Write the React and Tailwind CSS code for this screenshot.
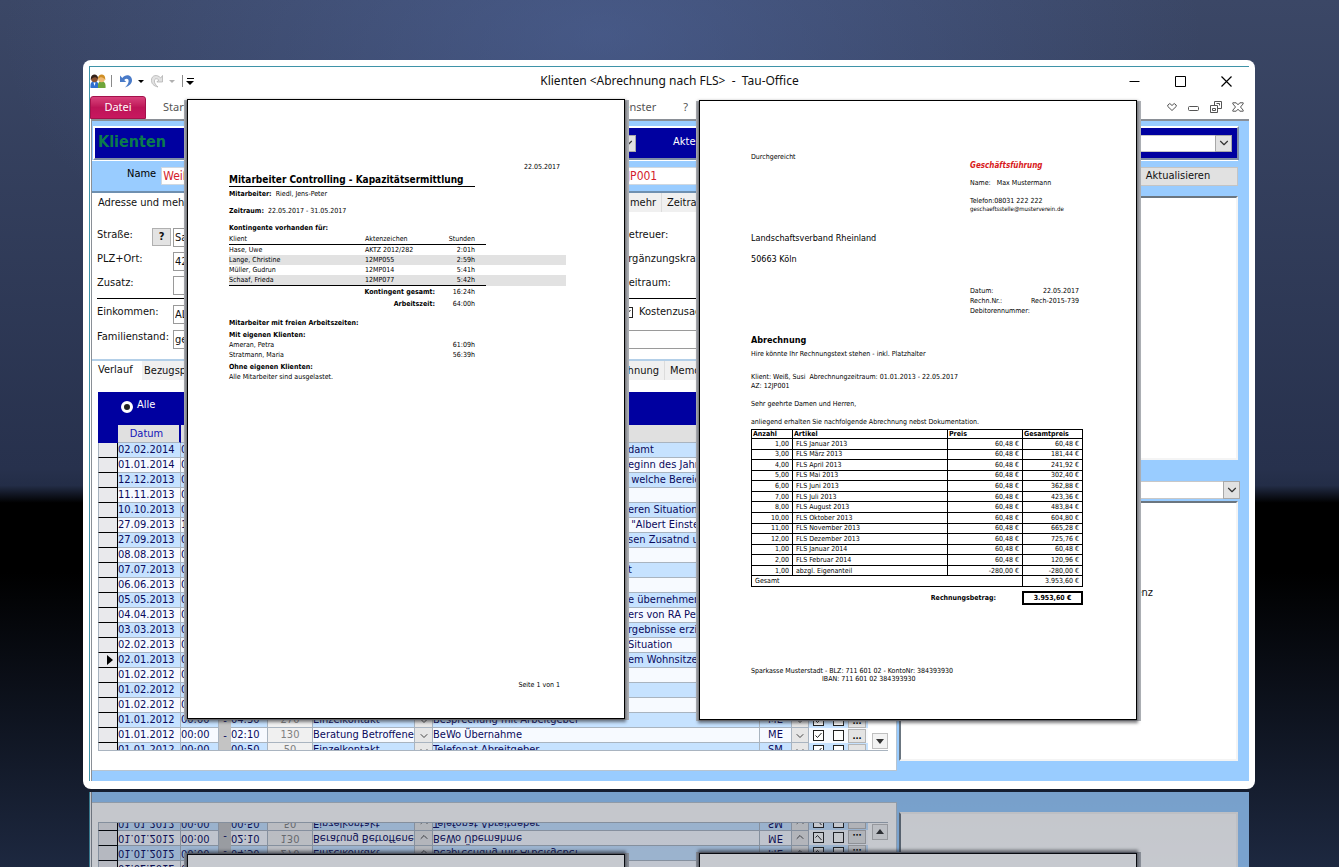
import React, { useId } from 'react';
import { ChevronDown } from 'lucide-react';

const entries = [
  { date: '02.02.2014', from: '00:00', tail: 'damt' },
  { date: '01.01.2014', from: '00:00', tail: 'eginn des Jahres' },
  { date: '12.12.2013', from: '00:00', tail: ' welche Bereiche' },
  { date: '11.11.2013', from: '00:00' },
  { date: '10.10.2013', from: '00:00', tail: 'eren Situation' },
  { date: '27.09.2013', from: '10:00', tail: ' "Albert Einstein"' },
  { date: '27.09.2013', from: '00:00', tail: 'sen Zusatnd und' },
  { date: '08.08.2013', from: '00:00' },
  { date: '07.07.2013', from: '00:00', tail: 't' },
  { date: '06.06.2013', from: '00:00' },
  { date: '05.05.2013', from: '00:00', tail: 'e übernehmen' },
  { date: '04.04.2013', from: '00:00', tail: 'ers von RA Peter' },
  { date: '03.03.2013', from: '00:00', tail: 'rgebnisse erzielt' },
  { date: '02.02.2013', from: '00:00', tail: 'Situation' },
  { date: '02.01.2013', from: '00:00', tail: 'em Wohnsitze', current: true },
  { date: '01.02.2012', from: '00:00' },
  { date: '01.02.2012', from: '00:00' },
  { date: '01.02.2012', from: '00:00' },
  { date: '01.01.2012', from: '00:00', to: '04:30', min: '270', type: 'Einzelkontakt', text: 'Besprechung mit Arbeitgeber', who: 'ME' },
  { date: '01.01.2012', from: '00:00', to: '02:10', min: '130', type: 'Beratung Betroffener', text: 'BeWo Übernahme', who: 'ME' },
  { date: '01.01.2012', from: '00:00', to: '00:50', min: '50', type: 'Einzelkontakt', text: 'Telefonat Abreitgeber', who: 'SM' },
];

const quotas = [
  ['Hase, Uwe', 'AKTZ 2012/282', '2:01h'],
  ['Lange, Christine', '12MP055', '2:59h'],
  ['Müller, Gudrun', '12MP014', '5:41h'],
  ['Schaaf, Frieda', '12MP077', '5:42h'],
];

const positions = [
  ['1,00', 'FLS Januar 2013', '60,48 €', '60,48 €'],
  ['3,00', 'FLS März 2013', '60,48 €', '181,44 €'],
  ['4,00', 'FLS April 2013', '60,48 €', '241,92 €'],
  ['5,00', 'FLS Mai 2013', '60,48 €', '302,40 €'],
  ['6,00', 'FLS Juni 2013', '60,48 €', '362,88 €'],
  ['7,00', 'FLS Juli 2013', '60,48 €', '423,36 €'],
  ['8,00', 'FLS August 2013', '60,48 €', '483,84 €'],
  ['10,00', 'FLS Oktober 2013', '60,48 €', '604,80 €'],
  ['11,00', 'FLS November 2013', '60,48 €', '665,28 €'],
  ['12,00', 'FLS Dezember 2013', '60,48 €', '725,76 €'],
  ['1,00', 'FLS Januar 2014', '60,48 €', '60,48 €'],
  ['2,00', 'FLS Februar 2014', '60,48 €', '120,96 €'],
  ['1,00', 'abzgl. Eigenanteil', '-280,00 €', '-280,00 €'],
];

const Combo = ({ label, className }) => (
  <div className={`relative bg-white ${className}`}>
    <select aria-label={label} className="block h-full w-full appearance-none border border-[#c8c8c8] bg-white"></select>
    <span className="pointer-events-none absolute inset-y-0 right-0 flex w-[17px] items-center justify-center border border-[#a8a8a8] bg-[#e2e2e2]">
      <ChevronDown className="h-[14px] w-[14px] text-[#333]" strokeWidth={2} />
    </span>
  </div>
);

const TitleBar = () => (
  <div className="grid h-7 grid-cols-[1fr_auto_1fr] items-center bg-white">
    <div className="flex items-center">
      <svg className="h-[15px] w-4" viewBox="0 0 16 15">
        <path d="M.5 14c-.5-5 1-7 4-7s4.500 2 4 7z" fill="#2f6fd0" />
        <path d="M8 14c-.5-5 1-7 3.500-7s4.500 2 4 7z" fill="#6fa53a" />
        <circle cx="4.500" cy="4.800" r="3.400" fill="#8a5231" />
        <path d="M.8 6C0-1 8.500-1 8 5 6 2.500 3 2.500.8 6z" fill="#33221a" />
        <circle cx="11.500" cy="4.800" r="3.400" fill="#efb873" />
        <path d="M8 5c0-6 8-6 7.300 1C13 2.500 10 2.500 8 5z" fill="#cf8f25" />
        <path d="M3.500 8.500 4.500 12l1-3.500z" fill="#fff" />
      </svg>
      <span className="ml-[5px] h-3 w-px bg-[#8a8a8a]" />
      <button type="button" aria-label="Rückgängig" className="ml-2">
        <svg className="h-[14px] w-3" viewBox="0 0 12 14">
          <path d="M0 1.500V8h6.200L4.200 6C6 4.200 8.600 4.400 8.600 7c0 2.200-1.200 4-3.600 6.500C9.500 12 12 9.500 12 6.300 12 1.200 5.800-.6 2.300 4z" fill="#4a7bc8" />
        </svg>
      </button>
      <span className="ml-[6px] border-x-[3px] border-t-[3px] border-x-transparent border-t-black" />
      <button type="button" aria-label="Wiederholen" className="ml-[7px]">
        <svg className="h-[14px] w-3" viewBox="0 0 12 14">
          <path d="M11.500 1.500V8H5.800l2-2C6 4.200 3.400 4.400 3.400 7c0 2.200 1.200 4 3.600 6C2.500 12 .4 9.500.4 6.300.4 1.200 6.200-.2 9.700 4z" fill="#e2e2e2" stroke="#aaa" strokeWidth=".7" />
        </svg>
      </button>
      <span className="ml-[6px] border-x-[3px] border-t-[3px] border-x-transparent border-t-[#b0b0b0]" />
      <span className="ml-[7px] h-3 w-px bg-[#8a8a8a]" />
      <button type="button" aria-label="Symbolleiste anpassen" className="ml-[3px] flex flex-col items-center gap-0.5">
        <span className="h-px w-[7px] bg-black" />
        <span className="border-x-4 border-t-4 border-x-transparent border-t-black" />
      </button>
    </div>
    <h1 className="whitespace-pre font-['Noto_Sans',sans-serif] text-[12px] text-[#111]">{'Klienten <Abrechnung nach FLS>  -  Tau-Office'}</h1>
    <div className="flex justify-end text-black">
      <button type="button" aria-label="Minimieren" className="flex w-[46px] items-center justify-center">
        <svg className="h-[11px] w-[11px]" viewBox="0 0 11 11" fill="none" stroke="currentColor"><path d="M.5 5.500h10" /></svg>
      </button>
      <button type="button" aria-label="Maximieren" className="flex w-[46px] items-center justify-center">
        <svg className="h-[11px] w-[11px]" viewBox="0 0 11 11" fill="none" stroke="currentColor"><path d="M.5.5h10v10H.5z" /></svg>
      </button>
      <button type="button" aria-label="Schließen" className="flex w-[46px] items-center justify-center">
        <svg className="h-[11px] w-[11px]" viewBox="0 0 11 11" fill="none" stroke="currentColor" strokeWidth="1.200"><path d="m.5.5 10 10M10.500.5l-10 10" /></svg>
      </button>
    </div>
  </div>
);

const MenuBar = () => (
  <div className="flex h-6 items-center bg-white font-['Noto_Sans',sans-serif] text-[11px] text-[#555]">
    <button type="button" className="h-[23px] w-14 rounded-t-[3px] border border-[#a3114b] bg-linear-to-b from-[#d9407c] via-[#bd1457] to-[#c8185f] text-white">Datei</button>
    <button type="button" className="ml-[17px]">Start</button>
    <button type="button" className="ml-auto">Fenster</button>
    <button type="button" className="ml-[27px] mr-[473px]">?</button>
    <div className="flex">
      <button type="button" aria-label="Menüband ausblenden" className="flex w-[22px] items-center justify-center">
        <svg className="h-[10px] w-[10px]" viewBox="0 0 10 10" fill="none" stroke="#555"><path d="M.8 3 2.800 1.500 5 3.500l2.200-2L9.200 3v1.500L5 8.500.8 4.500z" /></svg>
      </button>
      <button type="button" aria-label="Fenster minimieren" className="flex w-[22px] items-center justify-center">
        <svg className="h-[10px] w-3" viewBox="0 0 12 10" fill="none" stroke="#555"><rect x=".5" y="4.500" width="10" height="4" rx="1" /></svg>
      </button>
      <button type="button" aria-label="Fenster wiederherstellen" className="flex w-[22px] items-center justify-center">
        <svg className="h-3 w-3" viewBox="0 0 12 12" fill="none" stroke="#555"><path d="M4.500 4V.5h7v7H8M.5 4.500h7v7h-7zM2.500 7.500h3v2h-3zM6.500 2.500h3v2" /></svg>
      </button>
      <button type="button" aria-label="Fenster schließen" className="flex w-[22px] items-center justify-center">
        <svg className="h-[10px] w-3" viewBox="0 0 12 10" fill="none" stroke="#555"><path d="M.8.8h3.400L6 2.800 7.800.8h3.400v1L8.500 5l2.700 3.200v1H7.800L6 7.200 4.200 9.200H.8v-1L3.500 5 .8 1.800z" /></svg>
      </button>
    </div>
  </div>
);

const Field = ({ label, value }) => (
  <label className="flex h-6 w-[530px] items-end pl-[5px]">
    <span className="flex h-full w-[76px] items-center whitespace-nowrap">{label}</span>
    <input defaultValue={value} className="h-[19px] w-[240px] border border-[#9a9a9a] bg-white px-px" />
  </label>
);

const Tab = ({ children, active, className }) => (
  <button type="button" className={`flex items-center whitespace-nowrap ${active ? 'bg-white' : 'border-r border-[#dcdcdc] bg-[#f0f0f0]'} ${className}`}>{children}</button>
);

const CheckBox = ({ checked, label, className = '' }) => (
  <span className={`relative block h-[11px] w-[11px] text-[#222] ${className}`}>
    <input type="checkbox" aria-label={label} defaultChecked={checked} className="block h-[11px] w-[11px] appearance-none border border-current bg-white" />
    {checked && (
      <svg className="pointer-events-none absolute inset-0 h-[11px] w-[11px]" viewBox="0 0 11 11" fill="none" stroke="currentColor"><path d="m2.500 5.500 2 2 4-4.500" /></svg>
    )}
  </span>
);

const Details = () => {
  const streetId = useId();
  return (
    <div>
      <div className="flex h-[19px]">
        <Tab active className="pl-[6px] pr-2">Adresse und mehr</Tab>
        <Tab className="flex-1 justify-end pr-[5px]">Betreuung und mehr</Tab>
        <Tab className="w-[234px] pl-[5px]">Zeitraum</Tab>
      </div>
      <div className="mt-[11px] flex">
        <div>
          <div className="flex h-6 w-[530px] items-end pl-[5px]">
            <label htmlFor={streetId} className="flex h-full w-[55px] items-center">Straße:</label>
            <button type="button" aria-label="Hilfe" className="mb-px h-[18px] w-[19px] border border-[#b0b0b0] bg-[#e3e3e3] font-bold">?</button>
            <input id={streetId} defaultValue="Sandweg 12" className="ml-0.5 h-[19px] w-[240px] border border-[#9a9a9a] bg-white px-px" />
          </div>
          <Field label="PLZ+Ort:" value="42103" />
          <Field label="Zusatz:" value="" />
        </div>
        <div className="flex flex-col *:flex *:h-6 *:items-center">
          <span>Betreuer:</span>
          <span>Ergänzungskraft:</span>
          <span>Zeitraum:</span>
        </div>
      </div>
      <hr className="ml-[5px] mt-[3px] border-black" />
      <div className="flex pt-px">
        <div className="flex flex-col gap-px">
          <Field label="Einkommen:" value="ALG II" />
          <Field label="Familienstand:" value="geschieden" />
        </div>
        <div className="flex flex-1 flex-col justify-between">
          <div className="flex h-6 items-center gap-[6px]">
            <CheckBox checked label="Kostenzusage" />
            <span>Kostenzusage</span>
          </div>
          <input aria-label="Bemerkung" className="h-[19px] w-full border border-[#9a9a9a] bg-white" />
        </div>
      </div>
    </div>
  );
};

const DropCell = () => (
  <td className="border-r border-b border-[#a9b4c0] bg-[#e6e6e6] p-0">
    <ChevronDown className="mx-auto mt-[2px] h-3 w-3 text-[#444]" />
  </td>
);

const cell = 'overflow-hidden whitespace-pre border-r border-b border-[#a9b4c0] p-0';

const Journal = () => (
  <div className="ml-[6px] mr-2 mt-3">
    <fieldset className="flex h-[33px] items-center bg-[#0000a0] pl-[23px] text-white">
      <label className="flex items-center gap-1">
        <input type="radio" name={useId()} defaultChecked className="mb-1 h-3 w-3 appearance-none rounded-full border-[3px] border-white bg-[#222]" />
        <span className="mb-2">Alle</span>
      </label>
    </fieldset>
    <div className="flex h-[326px] overflow-hidden border-b border-[#a9b4c0]">
      <div className="min-w-0 flex-1">
        <table className="w-full table-fixed border-separate border-spacing-0 leading-[14px] text-[#0a0a5c]">
          <colgroup>
            <col className="w-[20px]" />
            <col className="w-[63px]" />
            <col className="w-[38px]" />
            <col className="w-[12px]" />
            <col className="w-[37px]" />
            <col className="w-[45px]" />
            <col className="w-[102px]" />
            <col className="w-[18px]" />
            <col />
            <col className="w-[32px]" />
            <col className="w-[17px]" />
            <col className="w-[19px]" />
            <col className="w-[20px]" />
            <col className="w-[20px]" />
          </colgroup>
          <thead>
            <tr className="h-[18px] text-[#1414b8]">
              <th className="bg-[#0000a0]"></th>
              <th className="border-r-2 border-b border-r-[#0000a0] border-b-[#a9b4c0] bg-[#e0e0e0] p-0 pr-1 font-normal">Datum</th>
              <th colSpan={3} className="border-b border-[#a9b4c0] bg-[#e0e0e0] p-0 font-normal">Zeit</th>
              <th className="border-b border-[#a9b4c0] bg-[#e0e0e0] p-0 font-normal">Min.</th>
              <th colSpan={8} className="border-b border-[#a9b4c0] bg-[#e0e0e0]"></th>
            </tr>
          </thead>
          <tbody>
            {entries.map((e, i) => (
              <tr key={i} className={`h-[15px] ${i % 2 ? 'bg-[#f7faff]' : 'bg-[#c6e2ff]'}`}>
                <td className="border-r border-b border-l border-black border-l-[#a9b4c0] bg-[#e9e9ec] p-0">
                  {e.current && <span className="ml-2 block h-0 w-0 border-y-[5px] border-l-[6px] border-y-transparent border-l-black" />}
                </td>
                <td className={cell}>{e.date}</td>
                <td className={cell}>{e.from}</td>
                <td className="bg-[#c4c4c4] p-0 text-center">-</td>
                <td className={cell}>{e.to}</td>
                <td className={`${cell} bg-[#f0f0f0] text-center text-[#808080]`}>{e.min}</td>
                <td className={cell}>{e.type}</td>
                <DropCell />
                <td className={cell}>{e.tail ? <span className="pl-[195px]">{e.tail}</span> : e.text}</td>
                <td className={`${cell} text-center`}>{e.who}</td>
                <DropCell />
                <td className="p-0"><CheckBox checked label="Erledigt" className="mx-auto" /></td>
                <td className="p-0"><CheckBox label="Gesperrt" className="mx-auto" /></td>
                <td className="p-0"><button type="button" className="block h-[14px] w-[18px] border border-[#b5b5b5] bg-[#e4e4e4] text-[9px] leading-[6px] font-bold text-black">...</button></td>
              </tr>
            ))}
          </tbody>
        </table>
      </div>
      <div className="flex w-5 flex-col justify-end bg-white pb-px pl-1">
        <button type="button" aria-label="Nach unten" className="flex h-4 w-4 items-center justify-center border border-[#c0c0c0] bg-[#f3f3f3]">
          <span className="border-x-4 border-t-[5px] border-x-transparent border-t-[#333]" />
        </button>
      </div>
    </div>
  </div>
);

const Workspace = () => (
  <div className="ml-px border-t-2 border-l border-[#8a8f96] bg-[#99ccff]">
    <div className="ml-px mr-[10px] mt-[5px] border-2 border-t-white border-r-[#7f8ea6] border-b-[#7f8ea6] border-l-white">
      <div className="flex h-[30px] items-center bg-[#0000a0] pl-[3px] pr-[5px] text-white">
        <h2 className="mb-0.5 w-[201px] text-[16px] font-bold text-[#0b7a4b]">Klienten</h2>
        <Combo label="Klient wählen" className="h-[17px] w-[337px]" />
        <span className="mb-0.5 ml-[37px] w-[120px]">Aktenzeichen</span>
        <Combo label="Aktenzeichen wählen" className="h-[17px] flex-1" />
      </div>
    </div>
    <div className="mr-[11px] flex h-[31px] items-center border-t border-white pl-[35px]">
      <label className="flex items-center gap-[5px] text-black">
        <span className="mb-1">Name</span>
        <input defaultValue="Weiß" className="h-[18px] w-[300px] border border-[#d0d8e0] bg-white px-px text-[12px] text-[#d41c2c]" />
      </label>
      <input aria-label="Aktenzeichen" defaultValue="12JP001" className="ml-[147px] h-[18px] w-[260px] border border-[#d0d8e0] bg-white px-1 text-[12px] text-[#d41c2c]" />
      <button type="button" className="ml-auto h-[19px] w-[120px] border border-[#c4c4c4] bg-[#e1e1e1]">Aktualisieren</button>
    </div>
    <div className="flex">
      <main className="mb-[10px] min-w-0 flex-1 border-t-2 border-r border-b border-t-[#6f90b0] border-r-[#b8c4d0] border-b-[#b8c4d0] bg-white pb-[19px]">
        <Details />
        <div className="mt-[10px] flex h-[21px] border-t-2 border-[#b3cfe8]">
          <Tab active className="w-[50px] pb-0.5 pl-[6px]">Verlauf</Tab>
          <Tab className="flex-1 pl-[2px]">Bezugspersonen</Tab>
          <Tab className="w-[90px] justify-end pr-[5px]">Abrechnung</Tab>
          <Tab className="w-[231px] pl-[5px]">Memo</Tab>
        </div>
        <Journal />
      </main>
      <aside className="flex w-[352px] flex-col pt-[5px] pr-[11px] pb-5 pl-[2px]">
        <div className="h-[264px] border-2 border-t-[#6b7680] border-r-[#f4f4f4] border-b-[#f4f4f4] border-l-[#6b7680] bg-white" />
        <Combo label="Dokumentart" className="-mr-0.5 mt-[21px] h-[18px]" />
        <div className="mt-[2px] flex-1 border-2 border-t-[#6b7680] border-r-[#f4f4f4] border-b-[#f4f4f4] border-l-[#6b7680] bg-white pt-[83px] pr-[83px] text-right">Korrespondenz</div>
      </aside>
    </div>
  </div>
);

const Sheet = ({ children, className }) => (
  <article className={`absolute h-[620px] w-[438px] border border-black bg-white text-[7px] leading-[10px] text-black shadow-[0_2px_3px_1px_rgba(40,40,45,0.6),4px_1px_0_0_#b0b3b8,-3px_1px_0_0_#b0b3b8] ${className}`}>
    {children}
  </article>
);

const CapacityReport = () => (
  <Sheet className="left-[97px] top-[32px] pl-[41px] pt-[62px]">
    <p className="pr-16 text-right">22.05.2017</p>
    <h2 className="mt-[2px] h-[13px] w-[246px] whitespace-nowrap border-b border-black text-[10px] leading-[12px] font-bold">Mitarbeiter Controlling - Kapazitätsermittlung</h2>
    <p className="mt-[2px]"><b>Mitarbeiter:</b>&nbsp; Riedl, Jens-Peter</p>
    <p className="mt-[7px]"><b>Zeitraum:</b>&nbsp; 22.05.2017 - 31.05.2017</p>
    <p className="mt-[7px] font-bold">Kontingente vorhanden für:</p>
    <table className="mt-px w-[337px] table-fixed border-separate border-spacing-0">
      <colgroup>
        <col className="w-[136px]" />
        <col className="w-[70px]" />
        <col className="w-[40px]" />
        <col className="w-[11px]" />
        <col />
      </colgroup>
      <thead>
        <tr className="text-left">
          <th className="border-b border-black p-0 font-normal">Klient</th>
          <th className="border-b border-black p-0 font-normal">Aktenzeichen</th>
          <th className="border-b border-black p-0 text-right font-normal">Stunden</th>
          <th className="border-b border-black p-0"></th>
          <th className="p-0"></th>
        </tr>
      </thead>
      <tbody>
        {quotas.map(([name, ref, hours], i) => {
          const line = i === quotas.length - 1 ? 'border-b border-black' : '';
          return (
            <tr key={name} className={i % 2 ? 'bg-[#e2e2e2]' : ''}>
              <td className={`p-0 ${line}`}>{name}</td>
              <td className={`p-0 ${line}`}>{ref}</td>
              <td className={`p-0 text-right ${line}`}>{hours}</td>
              <td className={`p-0 ${line}`}></td>
              <td className="p-0"></td>
            </tr>
          );
        })}
      </tbody>
      <tfoot>
        <tr className="text-right">
          <td colSpan={2} className="p-0 pt-px font-bold">Kontingent gesamt:</td>
          <td className="p-0 pt-px">16:24h</td>
        </tr>
        <tr className="text-right">
          <td colSpan={2} className="p-0 pt-[2px] font-bold">Arbeitszeit:</td>
          <td className="p-0 pt-[2px]">64:00h</td>
        </tr>
      </tfoot>
    </table>
    <p className="mt-[9px] font-bold">Mitarbeiter mit freien Arbeitszeiten:</p>
    <p className="mt-[2px] font-bold">Mit eigenen Klienten:</p>
    <p className="flex w-[246px] justify-between"><span>Ameran, Petra</span><span>61:09h</span></p>
    <p className="flex w-[246px] justify-between"><span>Stratmann, Maria</span><span>56:39h</span></p>
    <p className="mt-[2px] font-bold">Ohne eigenen Klienten:</p>
    <p>Alle Mitarbeiter sind ausgelastet.</p>
    <p className="mt-[298px] pr-16 text-right">Seite 1 von 1</p>
  </Sheet>
);

const Invoice = () => (
  <Sheet className="left-[609px] top-[33px] pl-[51px] pr-[53px] pt-[51px]">
    <p>Durchgereicht</p>
    <address className="-mt-px ml-[219px] not-italic">
      <p className="text-[8px] font-bold text-[#d81920] italic">Geschäftsführung</p>
      <p className="mt-[7px]">Name:&nbsp;&nbsp; Max Mustermann</p>
      <p className="mt-[9px] leading-[8px]">Telefon:08031 222 222</p>
      <p className="text-[6px] leading-[8px]">geschaeftsstelle@musterverein.de</p>
    </address>
    <p className="mt-5 text-[9px]">Landschaftsverband Rheinland</p>
    <p className="mt-[11px] text-[9px]">50663 Köln</p>
    <dl className="ml-[219px] mt-[22px] grid w-[109px] grid-cols-[auto_auto] *:even:text-right">
      <dt>Datum:</dt><dd>22.05.2017</dd>
      <dt>Rechn.Nr.:</dt><dd>Rech-2015-739</dd>
      <dt>Debitorennummer:</dt><dd></dd>
    </dl>
    <h2 className="mt-[19px] text-[9px] font-bold">Abrechnung</h2>
    <p className="mt-1">Hire könnte Ihr Rechnungstext stehen - inkl. Platzhalter</p>
    <p className="mt-[14px] leading-[9px]">Klient: Weiß, Susi&nbsp; Abrechnungzeitraum: 01.01.2013 - 22.05.2017<br />AZ: 12JP001</p>
    <p className="mt-2">Sehr geehrte Damen und Herren,</p>
    <p className="mt-2">anliegend erhalten Sie nachfolgende Abrechnung nebst Dokumentation.</p>
    <table className="mt-[2px] h-[158px] w-full table-fixed border-collapse leading-[8px] [&_td]:border [&_td]:border-black [&_td]:px-[3px] [&_td]:py-0 [&_th]:border [&_th]:border-black [&_th]:px-px [&_th]:py-0">
      <colgroup>
        <col className="w-[41px]" />
        <col />
        <col className="w-[75px]" />
        <col className="w-[60px]" />
      </colgroup>
      <thead>
        <tr className="text-left">
          <th>Anzahl</th>
          <th>Artikel</th>
          <th>Preis</th>
          <th>Gesamtpreis</th>
        </tr>
      </thead>
      <tbody>
        {positions.map(([count, article, price, total], i) => (
          <tr key={i}>
            <td className="text-right">{count}</td>
            <td>{article}</td>
            <td className="text-right">{price}</td>
            <td className="text-right">{total}</td>
          </tr>
        ))}
        <tr>
          <td colSpan={3}>Gesamt</td>
          <td className="text-right">3.953,60 €</td>
        </tr>
      </tbody>
    </table>
    <p className="mt-1 flex items-center justify-end font-bold">
      <span>Rechnungsbetrag:</span>
      <span className="ml-[26px] flex h-[14px] w-[61px] items-center justify-center border-2 border-black">3.953,60 €</span>
    </p>
    <footer className="mt-[62px] leading-[8px]">
      <p>Sparkasse Musterstadt - BLZ: 711 601 02 - KontoNr: 384393930</p>
      <p className="pl-[71px]">IBAN: 711 601 02 384393930</p>
    </footer>
  </Sheet>
);

const Office = () => (
  <div className="relative border-t border-l border-[#3f93a8] bg-white font-['DejaVu_Sans_Condensed','DejaVu_Sans',sans-serif] text-[11px] leading-[14px] text-[#111]">
    <TitleBar />
    <MenuBar />
    <Workspace />
    <CapacityReport />
    <Invoice />
  </div>
);

const App = () => (
  <div className="flex h-screen flex-col overflow-hidden bg-[radial-gradient(ellipse_600px_300px_at_45%_4%,rgba(86,112,176,0.45),transparent),linear-gradient(#3b4766_0%,#27314d_54%,#232d47_56%,#000_58%,#000_66%,#1d2840_100%)] pt-[60px] pr-[84px] pl-[83px]">
    <div className="shrink-0 rounded-lg bg-white px-[6px] pt-[6px] pb-2">
      <Office />
    </div>
    {/* mirror image on the floor below the window */}
    <div className="mx-[6px] mt-[3px] min-h-0 flex-1 overflow-hidden opacity-75" aria-hidden="true" inert>
      <div className="-scale-y-100">
        <Office />
      </div>
    </div>
  </div>
);

export default App;
